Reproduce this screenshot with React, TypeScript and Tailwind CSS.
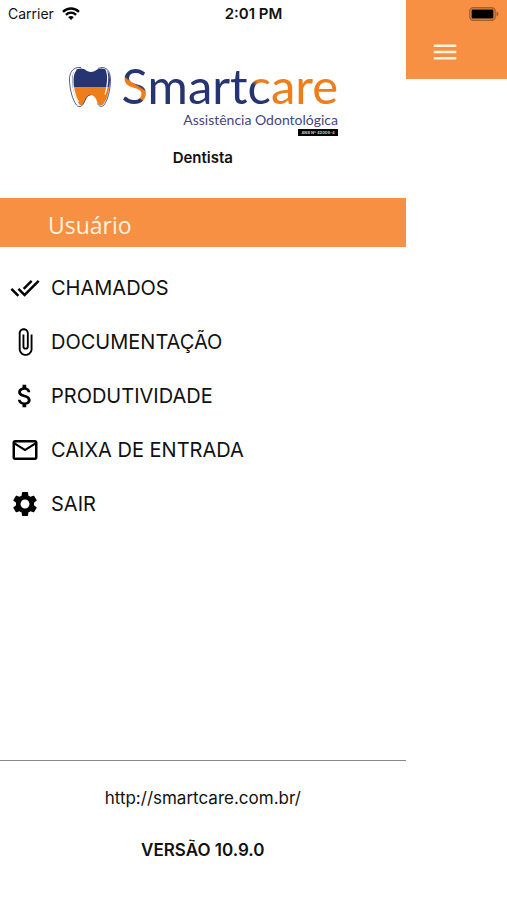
import { IconType } from "react-icons";
import {
  MdAttachFile,
  MdAttachMoney,
  MdDoneAll,
  MdMailOutline,
  MdMenu,
  MdSettings,
} from "react-icons/md";

const MENU_ITEMS: { label: string; icon: IconType }[] = [
  { label: "CHAMADOS", icon: MdDoneAll },
  { label: "DOCUMENTAÇÃO", icon: MdAttachFile },
  { label: "PRODUTIVIDADE", icon: MdAttachMoney },
  { label: "CAIXA DE ENTRADA", icon: MdMailOutline },
  { label: "SAIR", icon: MdSettings },
];

function StatusBar() {
  return (
    <div className="absolute inset-x-0 top-0 grid h-7 grid-cols-3 items-center px-2 text-sm">
      <div className="flex items-center gap-2">
        <span>Carrier</span>
        <svg viewBox="0 0 18 14" className="h-3.5 w-[18px]" fill="none" stroke="black">
          <path d="M1 4.8C5.6.3 12.4.3 17 4.8" strokeWidth="2.4" />
          <path d="M3.9 7.8c3-2.8 7.2-2.8 10.2 0" strokeWidth="2.3" />
          <path d="M6.2 10.2c1.6-1.5 4-1.5 5.6 0L9 13z" fill="black" stroke="none" />
        </svg>
      </div>
      <span className="text-center text-[15px] font-semibold">2:01 PM</span>
      <svg viewBox="0 0 30 14" className="h-3.5 w-[30px] justify-self-end">
        <rect x=".8" y=".8" width="25.4" height="12.4" rx="3.6" fill="none" stroke="#a5602f" strokeWidth="1.4" />
        <rect x="2.6" y="2.6" width="21.8" height="8.8" rx="1.2" />
        <path d="M27.5 4.6c2.6.8 2.6 4 0 4.8z" fill="#a5602f" />
      </svg>
    </div>
  );
}

function Tooth() {
  return (
    <svg viewBox="0 0 44 42" className="mt-2 h-[42px] w-11">
      <defs>
        <clipPath id="tooth">
          <path d="M13 2.5C17 2.5 19 6 23 6S29 2.5 33 2.5C39.500 2.5 42 7 42 14C41.500 24 39 34 35 38.500C32 41 29.500 37.500 28.500 34C27 30.500 25 29 22.500 29S18.500 31 17 34.500C15.500 38 13.500 41 11 38C7 32 4 22 4 14C4 7 7 2.500 13 2.500Z" />
        </clipPath>
      </defs>
      <g clipPath="url(#tooth)">
        <path fill="#263571" d="M0 0h44v21.500H0z" />
        <path fill="#ef7d1a" d="M0 21.500h44V42H0z" />
      </g>
      <path
        d="M8 4C4 8 4.500 18 6 24c1 5 2.500 9 4.500 12M38 3.500c3 6 1.500 18-1 25"
        fill="none"
        stroke="white"
        strokeWidth="1.2"
      />
      <path
        d="M13 1.500C5.500.5 1.300 6 1.500 14c.2 9 3 20 7 25 3 3.500 6.500 1 8.500-4.500 1.500-3.500 3-5.500 5.500-5.500"
        fill="none"
        stroke="#263571"
        strokeWidth=".8"
      />
      <path
        d="M30 2.500c7-3 12.500 1 12.500 11.500 0 8-2.500 20-6.500 25-2.500 2.500-5 1.500-6.500-1.500"
        fill="none"
        stroke="#263571"
        strokeWidth=".8"
      />
    </svg>
  );
}

function Logo() {
  return (
    <div className="flex gap-2.5">
      <Tooth />
      <div className="flex flex-col items-end">
        <div className="font-['Lato','Open_Sans',sans-serif] text-[49px] leading-[54px] text-[#263571]">
          <span className="bg-[linear-gradient(33deg,#263571_35%,#ef7d1a_37%,#ef7d1a_50%,#263571_53%)] bg-clip-text text-transparent">
            S
          </span>
          mart
          <span className="bg-[linear-gradient(35deg,#263571_44%,#ef7d1a_52%)] bg-clip-text text-transparent">
            c
          </span>
          <span className="text-[#ef7d1a]">are</span>
        </div>
        <div className="font-['Lato','Open_Sans',sans-serif] text-sm leading-4 text-[#45457f]">
          Assistência Odontológica
        </div>
        <div className="mt-px w-10 bg-black text-center text-[4px] leading-[7px] font-bold whitespace-nowrap text-[#cccccc]">
          ANS Nº 42005-4
        </div>
      </div>
    </div>
  );
}

export default function App() {
  return (
    <div className="relative flex min-h-screen bg-white font-['Inter','Liberation_Sans',sans-serif] text-[#111111]">
      <aside className="flex w-4/5 flex-col">
        <div className="flex flex-col items-center pt-[58px]">
          <Logo />
          <h1 className="mt-3 text-[15px] leading-5 font-semibold">Dentista</h1>
        </div>

        <h2 className="mt-[30px] bg-[#f79042] px-12 pt-3 pb-1.5 font-['Open_Sans','Noto_Sans',sans-serif] text-[23px] leading-[31px] text-[#fff3e0]">
          Usuário
        </h2>

        <nav className="mt-3.5">
          {MENU_ITEMS.map(({ label, icon: Icon }) => (
            <button
              key={label}
              type="button"
              className="flex h-[54px] w-full cursor-pointer items-center gap-[11px] pl-2.5 text-left text-xl"
            >
              <Icon className="size-[30px] shrink-0 text-black" />
              <span>{label}</span>
            </button>
          ))}
        </nav>

        <footer className="mt-auto flex flex-col items-center border-t border-[#888888] pt-[25px] pb-[38px] text-[17px] leading-6">
          <a href="http://smartcare.com.br/">http://smartcare.com.br/</a>
          <p className="mt-7 font-semibold">VERSÃO 10.9.0</p>
        </footer>
      </aside>

      <main className="flex-1">
        <header className="flex h-[79px] items-end bg-[#f79042] px-6 pb-3">
          <button type="button" aria-label="Menu" className="cursor-pointer text-[#fff3e0]">
            <MdMenu className="size-[30px]" />
          </button>
        </header>
      </main>

      <StatusBar />
    </div>
  );
}
